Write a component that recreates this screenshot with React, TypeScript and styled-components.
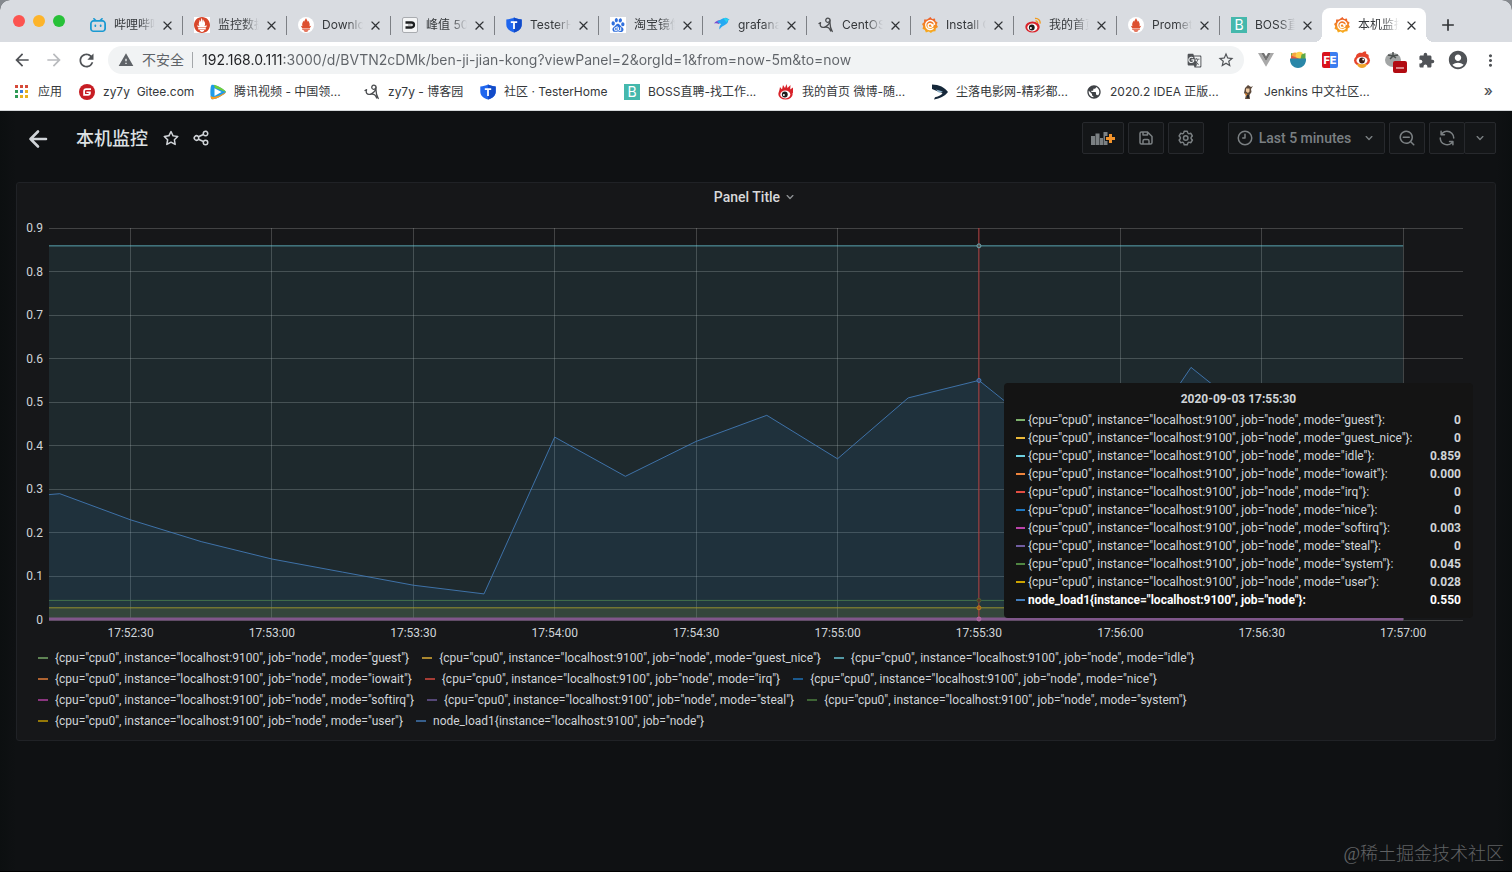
import React, { useLayoutEffect, useRef, useState } from "react";
import styled, { createGlobalStyle } from "styled-components";
import {
  MdArrowBack,
  MdArrowForward,
  MdRefresh,
  MdWarning,
  MdStarBorder,
  MdExtension,
  MdAccountCircle,
  MdMoreVert,
  MdGTranslate,
  MdClose,
  MdAdd,
  MdPublic,
} from "react-icons/md";
import { SiBilibili, SiPrometheus, SiBaidu } from "react-icons/si";

const uiFont = `Inter, "Noto Sans CJK SC", sans-serif`;
const panelFont = `Roboto, "Noto Sans CJK SC", sans-serif`;

const GlobalStyle = createGlobalStyle`
  *, *::before, *::after { box-sizing: border-box; }
  body { margin: 0; background: #85898e; font-family: ${uiFont}; }
  button { font: inherit; color: inherit; background: none; border: 0; padding: 0; margin: 0; cursor: pointer; }
  a { color: inherit; text-decoration: none; }
  svg { display: block; flex: none; }
`;

/* ---------- browser window ---------- */

const Window = styled.div`
  position: relative;
  display: flex;
  flex-direction: column;
  min-height: 100vh;
  border-radius: 10px 10px 0 0;
  overflow: hidden;
  background: #0f1113;
`;

const TabStrip = styled.header`
  display: flex;
  height: 42px;
  padding-right: 42px;
  background: #d9dce1;
`;

const TrafficLights = styled.div`
  display: flex;
  gap: 8px;
  width: 78px;
  padding: 15px 0 0 13px;
`;

const Light = styled.button<{ $color: string }>`
  width: 12px;
  height: 12px;
  border-radius: 50%;
  background: ${(p) => p.$color};
`;

const TabList = styled.nav`
  flex: 1;
  display: grid;
  grid-template-columns: repeat(8, minmax(0, 104fr)) repeat(4, minmax(0, 103fr)) minmax(0, 104fr);
  padding-top: 8px;
`;

const TabItem = styled.div<{ $active?: boolean; $divider?: boolean }>`
  position: relative;
  display: flex;
  align-items: center;
  padding: 0 7px 0 12px;
  border-radius: 8px 8px 0 0;
  background: ${(p) => (p.$active ? "#fff" : "transparent")};

  &::before {
    content: "";
    display: ${(p) => (p.$active ? "block" : "none")};
    position: absolute;
    bottom: 0;
    left: -8px;
    right: -8px;
    height: 8px;
    background:
      radial-gradient(circle at 0 0, transparent 8px, #fff 8px) left / 8px 8px no-repeat,
      radial-gradient(circle at 100% 0, transparent 8px, #fff 8px) right / 8px 8px no-repeat;
  }

  &::after {
    content: "";
    display: ${(p) => (p.$divider ? "block" : "none")};
    position: absolute;
    right: -1px;
    top: 8px;
    width: 1px;
    height: 19px;
    background: #7d8085;
  }
`;

const TabLink = styled.a`
  flex: 1;
  min-width: 0;
  display: flex;
  align-items: center;
  gap: 8px;
  height: 34px;
`;

const TabLabel = styled.span`
  flex: 1;
  min-width: 0;
  overflow: hidden;
  white-space: nowrap;
  font-size: 12px;
  line-height: 18px;
  color: #35383b;
  mask-image: linear-gradient(90deg, #000 calc(100% - 16px), transparent);
`;

const TabClose = styled.button`
  display: flex;
  align-items: center;
  justify-content: center;
  width: 16px;
  height: 16px;
  margin-left: 4px;
  color: #303336;
`;

const NewTab = styled.button`
  display: flex;
  align-items: center;
  justify-content: center;
  width: 44px;
  padding-top: 8px;
  color: #303336;
`;

const Toolbar = styled.div`
  display: flex;
  align-items: center;
  height: 36px;
  padding: 0 6px;
  background: #fff;
`;

const ToolButton = styled.button<{ $color?: string }>`
  display: flex;
  align-items: center;
  justify-content: center;
  width: 32px;
  height: 28px;
  color: ${(p) => p.$color ?? "#505357"};
`;

const Omnibox = styled.div`
  flex: 1;
  display: flex;
  align-items: center;
  height: 28px;
  margin: 0 6px;
  padding: 0 2px 0 10px;
  border-radius: 14px;
  background: #f1f3f4;
`;

const Security = styled.button`
  display: flex;
  align-items: center;
  gap: 8px;
  padding-right: 8px;
  border-right: 1px solid #a4a7aa;
  font-size: 14px;
  line-height: 16px;
  color: #5f6368;
`;

const Address = styled.input`
  flex: 1;
  min-width: 0;
  height: 24px;
  margin-left: 9px;
  padding: 0 0 2px;
  border: 0;
  outline: 0;
  font: 14px ${uiFont};
  color: #5f6368;
  -webkit-text-fill-color: transparent;
  background: linear-gradient(90deg, #202124 81px, #5f6368 81px);
  background-clip: text;
  -webkit-background-clip: text;
`;

const Bookmarks = styled.nav`
  display: flex;
  align-items: center;
  gap: 16px;
  height: 33px;
  padding: 0 19px 5px 13px;
  border-bottom: 1px solid #d5d8da;
  background: #fff;
`;

const Bookmark = styled.a`
  display: flex;
  align-items: center;
  gap: 8px;
  font-size: 12px;
  line-height: 18px;
  white-space: pre;
  color: #35383b;
`;

const BookmarkLabel = styled.span<{ $width?: number }>`
  width: ${(p) => (p.$width ? `${p.$width}px` : "auto")};
`;

const Overflow = styled.button`
  margin-left: auto;
  padding-bottom: 2px;
  font-size: 15px;
  font-weight: 500;
  line-height: 18px;
  color: #505357;
`;

/* ---------- brand marks ---------- */

const Gitee = () => (
  <svg width="16" height="16" viewBox="0 0 16 16">
    <circle cx="8" cy="8" r="8" fill="#c71d23" />
    <path d="M12 4.2H7.2a3 3 0 0 0-3 3v4.6h4.9a2.7 2.7 0 0 0 2.7-2.7V7.5H7.4v1.6h2.4a.8.8 0 0 1-.8.9H6V7.2A1.1 1.1 0 0 1 7.1 6H12z" fill="#fff" />
  </svg>
);

const Grafana = () => (
  <svg width="16" height="16" viewBox="0 0 16 16">
    <defs>
      <linearGradient id="grafana" x1="0" y1="0" x2="0" y2="1">
        <stop offset="0" stopColor="#ec5a2c" />
        <stop offset="1" stopColor="#f9b21d" />
      </linearGradient>
    </defs>
    <path
      fill="url(#grafana)"
      d="M8.4 0l1.7 1.9 2.9-.4.3 2.6 2.3 1.5-.9 2.2 1.3 2.3-2.2 1.5-.3 2.6-2.7.2L8.9 16l-2.2-1.4-2.8.9-1-2.5L.5 11.7l.7-2.5L0 7l2-1.7.1-2.7 2.9-.2z"
    />
    <path fill="none" stroke="#fff" strokeWidth="1.4" strokeLinecap="round" d="M12.6 7.2a4.5 4.5 0 1 0-1.5 4.300M9.9 8.3a1.9 1.9 0 1 0-1.7 2.2c2 0 3-1.4 2.8-3" />
  </svg>
);

const Shield = () => (
  <svg width="16" height="16" viewBox="0 0 16 16">
    <path d="M8 0.500C10 1.700 13 2.200 15.700 2.400V7.500c0 4-3 6.600-7.700 8-4.700-1.400-7.700-4-7.700-8V2.400C3 2.200 6 1.700 8 .5z" fill="#1f66ee" />
    <path d="M8 .5c2 1.200 5 1.700 7.700 1.900V7.500c0 4-3 6.600-7.700 8z" fill="#124bc8" />
    <path d="M4.800 4.300h6.400v1.600H8.900v6H7.100v-6H4.800z" fill="#fff" />
  </svg>
);

const BossTile = styled.span`
  display: flex;
  align-items: center;
  justify-content: center;
  width: 16px;
  height: 16px;
  background: #45b8ac;
  color: #fff;
  font-size: 14px;
  line-height: 16px;
`;
const Boss = () => <BossTile aria-hidden="true">B</BossTile>;

const Cnblogs = () => (
  <svg width="16" height="16" viewBox="0 0 16 16" fill="none" stroke="#4b4d50" strokeWidth="1.3" strokeLinecap="round" strokeLinejoin="round">
    <path d="M1 6.500l1.600-.8C1.500 8.500 3 11 6 10.300c3-.8 6-3.800 6.200-6.500C12.300 1.200 9.500.3 8.200 2 7 3.800 8.500 5.800 10.300 5.200 11.500 4.800 12 3.500 11.800 2.500M12.100 4c-.4 4 .4 7.500 2.200 10.500M6.500 10.300c2.800-.6 5.200.8 6.200 3.700" />
  </svg>
);

const PromBadge = styled.span<{ $square?: boolean }>`
  display: flex;
  align-items: center;
  justify-content: center;
  width: 16px;
  height: 16px;
  border-radius: ${(p) => (p.$square ? "0" : "50%")};
  background: #fff;
  color: #d8472b;
`;

const Flame = () => (
  <PromBadge>
    <svg width="16" height="16" viewBox="0 0 16 16" fill="#dd4f2f">
      <path d="M8 1c.3 1.500 1.600 2.100 1.500 3.800.4-.4.4-1 .4-1.400 1.500 1.700 2.300 3.700 1.600 5.800l1.700-.5-1.300 2.400H4.100L2.800 8.700l1.700.5c-.8-2-.1-4.200 1.600-5.800 0 .5.1 1 .4 1.400C6.300 3.100 7.700 2.500 8 1zM4.200 11.600h7.600v1.100H4.200zM5.500 13.200h5c-.4 1-1.500 1.500-2.500 1.500s-2.100-.5-2.500-1.500z" />
    </svg>
  </PromBadge>
);

const BlackD = () => (
  <svg width="16" height="16" viewBox="0 0 16 16">
    <rect x=".5" y=".5" width="15" height="15" rx="1.500" fill="#f4f5f6" stroke="#a9acb0" />
    <path d="M3.500 5.500h6a2.500 2.500 0 0 1 0 5h-6" fill="none" stroke="#1d1f21" strokeWidth="2.3" />
    <path d="M6 8h3.500" stroke="#888" strokeWidth="1" />
  </svg>
);

const Bird = () => (
  <svg width="16" height="16" viewBox="0 0 16 16">
    <path d="M0 6.500C2.500 3 5 3.200 7 3.200L5 7C3.500 6 1.500 6 0 6.500z" fill="#7b4bd0" />
    <path d="M3 4.500C6 3.500 8.500.8 11.500.8c2 0 2.300 1.200 4 1.800-1 .3-1.300 1-1.500 2-.6 3.500-5 2.900-8.500 7.900-.6-2 .2-4 1.700-5.500C5.500 6.500 4 5.500 3 4.500z" fill="#25a9f2" />
    <path d="M9.500 1.200c2.500-1 3.300.7 6 1.400-2 .6-2.300 1.500-3 3z" fill="#27d3ee" />
  </svg>
);

const WeiboEye = ({ flame }: { flame?: boolean }) => (
  <svg width="16" height="16" viewBox="0 0 16 16">
    {flame ? (
      <path d="M1 8L2 3l2 2.500L5 1l2 3L8.500 0l1 4 3-3-.3 4.500L15 3.500 15 9z" fill="#d8232a" />
    ) : (
      <path d="M10 1.500a4.300 4.300 0 0 1 5 5.200M10.500 4a2 2 0 0 1 2.200 2.400" fill="none" stroke="#f29a1c" strokeWidth="1.300" />
    )}
    <ellipse cx="7.500" cy="10" rx="7.200" ry="5.600" fill="#d8232a" />
    <ellipse cx="7.300" cy="10.500" rx="5" ry="3.900" fill="#fff" />
    <circle cx="6.800" cy="10.500" r="2.900" fill="#1c1c1c" />
    <circle cx="5.900" cy="11" r="1" fill="#fff" />
  </svg>
);

const Tencent = () => (
  <svg width="16" height="16" viewBox="0 0 16 16">
    <path d="M1.500 1C4-.7 15.800 6 16 8c-.2 2-12 8.700-14.500 7C0 13.500 0 2.500 1.500 1z" fill="#1e9be8" />
    <path d="M4 .8C8 1.500 15.900 6.500 16 8L5 4z" fill="#6fcf3a" />
    <path d="M3 13C7 13 12 10.500 16 8c-.2 2-12 8.700-14.500 7C1 14.500.8 13.500.7 12z" fill="#fb9c1c" />
    <path d="M4.500 4.200L11.500 8l-7 4z" fill="#fff" />
  </svg>
);

const Arrowhead = () => (
  <svg width="16" height="16" viewBox="0 0 16 16">
    <path d="M0 .5C7 .5 13 3.500 16 8c-3.500 4.500-8 6.500-14 7.500l1-2.200c4-.8 6.500-2.300 7.500-4.300L6 7.500 0 5z" fill="#152739" />
    <path d="M4 5.500l7 2-4 1.300z" fill="#8fb3cc" />
  </svg>
);

const Jenkins = () => (
  <svg width="16" height="16" viewBox="0 0 16 16">
    <path d="M5 4l3-3 3 2 2-1-2 3 .5 3-2 3 .5 4H5l1-4-2-2z" fill="#5d4a3c" />
    <path d="M6 4.500h3.500v3L8 9 6 7.500z" fill="#eec9a2" />
    <path d="M5 9l2.500 1L6 12.500z" fill="#d9822b" />
    <path d="M7 11h2v3H7z" fill="#2a2b30" />
  </svg>
);

const AppsGrid = () => (
  <svg width="17" height="16" viewBox="0 0 17 16">
    {["#d64a3a", "#d64a3a", "#d64a3a", "#2f9a55", "#3b7de0", "#e9b11f", "#2f9a55", "#e9b11f", "#e9b11f"].map((c, i) => (
      <rect key={i} x={2 + (i % 3) * 5} y={1 + Math.floor(i / 3) * 5} width="3" height="3" fill={c} />
    ))}
  </svg>
);

const VueMark = () => (
  <svg width="16" height="14" viewBox="0 0 16 14">
    <path d="M0 0h3.200L8 8.200 12.800 0H16L8 13.800z" fill="#a9a9a9" />
    <path d="M3.200 0H6l2 3.400L10 0h2.800L8 8.200z" fill="#737373" />
  </svg>
);

const Bowl = () => (
  <svg width="18" height="18" viewBox="0 0 18 18">
    <path d="M2 2l4 1-1 5H2z" fill="#5ea845" />
    <circle cx="6" cy="5" r="3.500" fill="#f4a340" />
    <circle cx="10.500" cy="4.500" r="3.800" fill="#fbd04a" />
    <path d="M12.500 3.500L16.500 2v6h-5z" fill="#5ea845" />
    <path d="M2 4.500L11 8H2z" fill="#e4573d" />
    <path d="M1 7.500h16c.5 5-3 9.500-8 9.500S.5 12.500 1 7.500z" fill="#2a87a8" />
  </svg>
);

const FeTile = styled.span`
  display: flex;
  align-items: center;
  justify-content: center;
  width: 16px;
  height: 16px;
  border-radius: 2px;
  background: linear-gradient(90deg, #d9121c 50%, #3b7df0 50%);
  color: #fff;
  font-size: 11px;
  font-weight: 800;
  line-height: 16px;
`;

const WeiboPet = () => (
  <svg width="18" height="18" viewBox="0 0 18 18">
    <path d="M3 8C2 3 6 1 9 2c1-1 3-2 4.500-1C12.500 1.500 13 2 13.500 3 16.500 3 16 6 15 8z" fill="#e6442c" />
    <ellipse cx="9" cy="9.500" rx="8" ry="5.500" fill="#e6442c" />
    <path d="M4 13h10c-.5 2.500-2.500 4-5 4s-4.500-1.500-5-4z" fill="#f2a42b" />
    <ellipse cx="9" cy="9.500" rx="5.500" ry="3.800" fill="#fff" />
    <circle cx="9" cy="9.500" r="2.900" fill="#3a1d18" />
    <circle cx="10.200" cy="8.500" r=".9" fill="#fff" />
  </svg>
);

const Tomato = () => (
  <svg width="26" height="26" viewBox="0 0 26 26">
    <ellipse cx="12" cy="13" rx="8" ry="7" fill="#a3a6a6" />
    <path d="M12 5v4m0 0L7 8m5 1l5-1m-5 1l-3 3m3-3l3 2" stroke="#4c5150" strokeWidth="1.500" fill="none" />
    <rect x="12" y="14" width="14" height="12" rx="2" fill="#b20b12" />
    <path d="M15 21h8" stroke="#fff" strokeWidth="1.200" />
  </svg>
);

/* ---------- dashboard ---------- */

const Dashboard = styled.main`
  flex: 1;
  display: flex;
  flex-direction: column;
  gap: 28px;
  padding: 11px 16px 16px;
  border-bottom: 1px solid #000;
  background: linear-gradient(90deg, #0c0f10, #0f1113 16px, #0f1113 calc(100% - 16px), #0c0f10);
  font-family: ${panelFont};
  color: #d0d4d8;
`;

const NavBar = styled.div`
  display: flex;
  align-items: center;
  height: 32px;
  padding-left: 10px;
`;

const BackButton = styled.button`
  margin-right: 26px;
  padding-top: 2px;
`;

const Title = styled.h1`
  margin: 0 14px 0 0;
  padding-top: 2px;
  font-size: 18px;
  font-weight: 500;
  line-height: 24px;
  color: #dde1e4;
`;

const TitleAction = styled.button`
  margin-right: 12px;
`;

const NavActions = styled.div`
  display: flex;
  gap: 4px;
  margin-left: auto;
`;

const NavButton = styled.button<{ $width: number; $gapBefore?: boolean; $joined?: boolean }>`
  display: flex;
  align-items: center;
  justify-content: center;
  width: ${(p) => p.$width}px;
  height: 32px;
  margin-left: ${(p) => (p.$gapBefore ? "20px" : p.$joined ? "-5px" : "0")};
  border: 1px solid #27292d;
  border-radius: 2px;
  background: #141618;
  color: #7b8083;
`;

const RangeLabel = styled.span`
  margin: 0 10px 0 5px;
  font-size: 14px;
  font-weight: 500;
  line-height: 20px;
  white-space: nowrap;
`;

const Panel = styled.section`
  display: flex;
  flex-direction: column;
  border: 1px solid #202226;
  border-radius: 3px;
  background: #161719;
`;

const PanelTitle = styled.button`
  display: flex;
  align-items: center;
  justify-content: center;
  gap: 2px;
  height: 28px;
  margin-bottom: 2px;
  font-size: 14px;
  font-weight: 500;
  line-height: 20px;
  color: #d8d9da;

  svg {
    color: #8e9194;
  }
`;

const ChartArea = styled.div`
  position: relative;
  height: 432px;

  text {
    font: 12px ${panelFont};
    fill: #d0d4d8;
  }
`;

const Legend = styled.ul`
  display: flex;
  flex-wrap: wrap;
  column-gap: 13px;
  margin: 0;
  padding: 2px 16px 9px 21px;
  list-style: none;
`;

const LegendItem = styled.li`
  display: flex;
  align-items: center;
  gap: 7px;
  height: 21px;
  font-size: 12px;
  line-height: 18px;
  white-space: nowrap;
`;

const Swatch = styled.span<{ $color: string; $dim?: boolean }>`
  display: inline-block;
  width: ${(p) => (p.$dim ? 10 : 9)}px;
  height: 2px;
  background: ${(p) => p.$color};
  opacity: ${(p) => (p.$dim ? 0.7 : 1)};
`;

const Tooltip = styled.div`
  position: absolute;
  width: 469px;
  padding: 7px 12px 9px;
  border-radius: 4px;
  background: #141414;
`;

const TooltipTable = styled.table`
  width: 100%;
  border-collapse: collapse;
  font-size: 12px;
  line-height: 18px;
  white-space: nowrap;

  caption {
    padding-bottom: 3px;
    font-weight: 700;
    text-align: center;
  }
  th {
    display: flex;
    align-items: center;
    gap: 3px;
    padding: 0;
    font-weight: 400;
    text-align: left;
  }
  td {
    padding: 0;
    font-weight: 700;
    text-align: right;
  }
`;

const TooltipRow = styled.tr<{ $active?: boolean }>`
  color: ${(p) => (p.$active ? "#fff" : "inherit")};
  && th {
    font-weight: ${(p) => (p.$active ? 700 : 400)};
  }
`;

const Watermark = styled.div`
  position: absolute;
  right: 8px;
  bottom: 5px;
  font: 300 18px/26px "Liberation Serif", "Noto Sans CJK SC", serif;
  color: #606264;
`;

/* Line icons on a 24-unit grid. */
const paths = {
  star: "M22,9.67A1,1,0,0,0,21.14,9l-5.69-.83L12.9,3a1,1,0,0,0-1.8,0L8.55,8.16,2.86,9a1,1,0,0,0-.81.68,1,1,0,0,0,.25,1l4.13,4-1,5.68A1,1,0,0,0,6.9,21.44L12,18.77l5.1,2.67a.93.93,0,0,0,.46.12,1,1,0,0,0,.59-.19,1,1,0,0,0,.4-1l-1-5.68,4.13-4A1,1,0,0,0,22,9.67Zm-6.15,4a1,1,0,0,0-.29.88l.72,4.2-3.76-2a1.06,1.06,0,0,0-.94,0l-3.76,2,.72-4.2a1,1,0,0,0-.29-.88l-3-3,4.21-.61a1,1,0,0,0,.76-.55L12,5.7l1.88,3.82a1,1,0,0,0,.76.55l4.21.61Z",
  share:
    "M18,14a4,4,0,0,0-3.08,1.48l-5.1-2.35a3.64,3.64,0,0,0,0-2.26l5.1-2.35A4,4,0,1,0,14,6a4.17,4.17,0,0,0,.07.71L8.79,9.14a4,4,0,1,0,0,5.72l5.28,2.43A4.17,4.17,0,0,0,14,18a4,4,0,1,0,4-4ZM18,4a2,2,0,1,1-2,2A2,2,0,0,1,18,4ZM6,14a2,2,0,1,1,2-2A2,2,0,0,1,6,14Zm12,6a2,2,0,1,1,2-2A2,2,0,0,1,18,20Z",
  save: "M20.71,9.29l-6-6a1,1,0,0,0-.32-.21A1.09,1.09,0,0,0,14,3H6A3,3,0,0,0,3,6V18a3,3,0,0,0,3,3H18a3,3,0,0,0,3-3V10A1,1,0,0,0,20.71,9.29ZM9,5h4V7H9Zm6,14H9V16a1,1,0,0,1,1-1h4a1,1,0,0,1,1,1Zm4-1a1,1,0,0,1-1,1H17V16a3,3,0,0,0-3-3H10a3,3,0,0,0-3,3v3H6a1,1,0,0,1-1-1V6A1,1,0,0,1,6,5H7V8A1,1,0,0,0,8,9h6a1,1,0,0,0,1-1V6.41l4,4Z",
  cog: "M19.9,12.66a1,1,0,0,1,0-1.32L21.18,9.9a1,1,0,0,0,.12-1.17l-2-3.46a1,1,0,0,0-1.07-.48l-1.88.38a1,1,0,0,1-1.15-.66l-.61-1.83A1,1,0,0,0,13.64,2h-4a1,1,0,0,0-1,.68L8.08,4.51a1,1,0,0,1-1.15.66L5,4.79A1,1,0,0,0,4,5.27L2,8.73A1,1,0,0,0,2.1,9.9l1.27,1.44a1,1,0,0,1,0,1.32L2.1,14.1A1,1,0,0,0,2,15.27l2,3.46a1,1,0,0,0,1.07.48l1.88-.38a1,1,0,0,1,1.15.66l.61,1.83a1,1,0,0,0,1,.68h4a1,1,0,0,0,.95-.68l.61-1.83a1,1,0,0,1,1.15-.66l1.88.38a1,1,0,0,0,1.07-.48l2-3.46a1,1,0,0,0-.12-1.17ZM18.41,14l.8.9-1.28,2.22-1.18-.24a3,3,0,0,0-3.45,2L12.92,20H10.36L10,18.86a3,3,0,0,0-3.45-2l-1.18.24L4.07,14.89l.8-.9a3,3,0,0,0,0-4l-.8-.9L5.35,6.89l1.18.24a3,3,0,0,0,3.45-2L10.36,4h2.56l.38,1.14a3,3,0,0,0,3.45,2l1.18-.24,1.28,2.22-.8.9A3,3,0,0,0,18.41,14ZM11.64,8a4,4,0,1,0,4,4A4,4,0,0,0,11.64,8Zm0,6a2,2,0,1,1,2-2A2,2,0,0,1,11.64,14Z",
  clock:
    "M12,2A10,10,0,1,0,22,12,10,10,0,0,0,12,2Zm0,18a8,8,0,1,1,8-8A8,8,0,0,1,12,20ZM12,6a1,1,0,0,0-1,1v4H9a1,1,0,0,0,0,2h3a1,1,0,0,0,1-1V7A1,1,0,0,0,12,6Z",
  down: "M17,9.17a1,1,0,0,0-1.41,0L12,12.71,8.46,9.17a1,1,0,0,0-1.41,0,1,1,0,0,0,0,1.42l4.24,4.24a1,1,0,0,0,1.42,0L17,10.59A1,1,0,0,0,17,9.17Z",
  zoomOut:
    "M15,10H7a1,1,0,0,0,0,2h8a1,1,0,0,0,0-2Zm6.71,10.29L18,16.61A9,9,0,1,0,16.61,18l3.68,3.68a1,1,0,0,0,1.42,0A1,1,0,0,0,21.71,20.29ZM11,18a7,7,0,1,1,7-7A7,7,0,0,1,11,18Z",
  sync: "M19.91,15.51H15.38a1,1,0,0,0,0,2h2.4A8,8,0,0,1,4,12a1,1,0,0,0-2,0,10,10,0,0,0,16.88,7.23V21a1,1,0,0,0,2,0V16.5A1,1,0,0,0,19.91,15.51ZM12,2A10,10,0,0,0,5.12,4.77V3a1,1,0,0,0-2,0V7.5a1,1,0,0,0,1,1h4.5a1,1,0,0,0,0-2H6.22A8,8,0,0,1,20,12a1,1,0,0,0,2,0A10,10,0,0,0,12,2Z",
};

const Glyph = ({ name, size }: { name: keyof typeof paths; size: number }) => (
  <svg width={size} height={size} viewBox="0 0 24 24" fill="currentColor" aria-hidden="true">
    <path d={paths[name]} />
  </svg>
);

const AddPanelIcon = () => (
  <svg width="26" height="16" viewBox="0 0 26 16" aria-hidden="true">
    <path d="M1 6h4v9H1zM5.500 3.500h4V15h-4zM10 8h3v7h-3zM13.500 2h4v13h-4z" fill="#7b8083" />
    <path d="M15 6h3V3h5v3h3v5h-3v3h-5v-3h-3z" fill="#141618" />
    <path d="M16 7h3V4h3v3h3v3h-3v3h-3v-3h-3z" fill="#f2932b" />
  </svg>
);

/* ---------- data ---------- */

const tabs = [
  { title: "哔哩哔哩", icon: <SiBilibili size={16} color="#1b9ad2" /> },
  { title: "监控数据", icon: <PromBadge $square><SiPrometheus size={16} /></PromBadge> },
  { title: "Download", icon: <Flame /> },
  { title: "峰值 500", icon: <BlackD /> },
  { title: "TesterHome", icon: <Shield /> },
  { title: "淘宝镜像", icon: <PromBadge $square><SiBaidu size={14} color="#2f6fdd" /></PromBadge> },
  { title: "grafana", icon: <Bird /> },
  { title: "CentOS 7", icon: <Cnblogs /> },
  { title: "Install Gr", icon: <Grafana /> },
  { title: "我的首页", icon: <WeiboEye /> },
  { title: "Prometheus", icon: <Flame /> },
  { title: "BOSS直聘", icon: <Boss /> },
  { title: "本机监控", icon: <Grafana />, active: true },
];

const bookmarks: { label: string; icon: React.ReactNode; width?: number }[] = [
  { label: "应用", icon: <AppsGrid />, width: 25 },
  { label: "zy7y  Gitee.com", icon: <Gitee />, width: 91 },
  { label: "腾讯视频 - 中国领...", icon: <Tencent />, width: 114 },
  { label: "zy7y - 博客园", icon: <Cnblogs />, width: 76 },
  { label: "社区 · TesterHome", icon: <Shield />, width: 104 },
  { label: "BOSS直聘-找工作...", icon: <Boss />, width: 114 },
  { label: "我的首页 微博-随...", icon: <WeiboEye flame />, width: 114 },
  { label: "尘落电影网-精彩都...", icon: <Arrowhead />, width: 114 },
  { label: "2020.2 IDEA 正版...", icon: <MdPublic size={16} color="#3f4246" />, width: 114 },
  { label: "Jenkins 中文社区...", icon: <Jenkins />, width: 114 },
];

const cpu = (mode: string) => `{cpu="cpu0", instance="localhost:9100", job="node", mode="${mode}"}`;

const series = [
  { name: cpu("guest"), value: "0", color: "#7eb26d" },
  { name: cpu("guest_nice"), value: "0", color: "#eab839" },
  { name: cpu("idle"), value: "0.859", color: "#6ed0e0" },
  { name: cpu("iowait"), value: "0.000", color: "#ef843c" },
  { name: cpu("irq"), value: "0", color: "#e24d42" },
  { name: cpu("nice"), value: "0", color: "#1f78c1" },
  { name: cpu("softirq"), value: "0.003", color: "#ba43a9" },
  { name: cpu("steal"), value: "0", color: "#705da0" },
  { name: cpu("system"), value: "0.045", color: "#508642" },
  { name: cpu("user"), value: "0.028", color: "#cca300" },
  { name: `node_load1{instance="localhost:9100", job="node"}`, value: "0.550", color: "#447ebc", active: true },
];

/* Seconds after 17:52:12.7 (left edge of the range) and the load sampled there. */
const load: [number, number][] = [
  [0, 0.288], [2.3, 0.29], [17.3, 0.23], [32.3, 0.18], [47.3, 0.14], [62.3, 0.11], [77.3, 0.08], [92.3, 0.06],
  [107.3, 0.42], [122.3, 0.33], [137.3, 0.41], [152.3, 0.47], [167.3, 0.37], [182.3, 0.51], [197.3, 0.55],
  [212.3, 0.42], [227.3, 0.34], [242.3, 0.58], [257.3, 0.45], [272.3, 0.38], [287.3, 0.34],
];

const times = ["17:52:30", "17:53:00", "17:53:30", "17:54:00", "17:54:30", "17:55:00", "17:55:30", "17:56:00", "17:56:30", "17:57:00"];
const levels = [0, 0.1, 0.2, 0.3, 0.4, 0.5, 0.6, 0.7, 0.8, 0.9];

const Chart = () => {
  const ref = useRef<HTMLDivElement>(null);
  const [width, setWidth] = useState(1478);

  useLayoutEffect(() => {
    const el = ref.current;
    if (!el) return;
    const measure = () => setWidth(el.clientWidth);
    measure();
    const observer = new ResizeObserver(measure);
    observer.observe(el);
    return () => observer.disconnect();
  }, []);

  const left = 32;
  const right = width - 32;
  const top = 15;
  const bottom = 407;
  const x = (t: number) => left + ((right - left) * t) / 300;
  const y = (v: number) => bottom - ((bottom - top) * v) / 0.9;
  const last = x(287.3);
  const cursor = x(197.3);
  const loadLine = load.map(([t, v]) => `${x(t).toFixed(1)},${y(v).toFixed(1)}`).join(" ");

  const flat = [
    { v: 0.859, stroke: "#6ed0e0", fill: 0.1, opacity: 0.75 },
    { v: 0.045, stroke: "#508642", fill: 0.1, opacity: 0.8 },
    { v: 0.028, stroke: "#b3a01c", fill: 0.14, opacity: 0.9 },
  ];

  return (
    <ChartArea ref={ref}>
      <svg width={width} height="432" role="img" aria-label="CPU modes and load over the last five minutes">
        <g stroke="#c8c8c8" strokeOpacity="0.25" shapeRendering="crispEdges">
          {levels.map((v) => (
            <line key={v} x1={left} x2={right} y1={y(v)} y2={y(v)} />
          ))}
          {times.map((t, i) => (
            <line key={t} x1={x(17.3 + i * 30)} x2={x(17.3 + i * 30)} y1={top} y2={bottom} />
          ))}
        </g>
        {flat.map((s) => (
          <g key={s.v}>
            <rect x={left} y={y(s.v)} width={last - left} height={bottom - y(s.v)} fill={s.stroke} fillOpacity={s.fill} />
            <line x1={left} x2={last} y1={y(s.v)} y2={y(s.v)} stroke={s.stroke} strokeOpacity={s.opacity} />
          </g>
        ))}
        <polygon points={`${left},${bottom} ${loadLine} ${last},${bottom}`} fill="#2a6db0" fillOpacity="0.12" />
        <polyline points={loadLine} fill="none" stroke="#447ebc" strokeOpacity="0.85" />
        <line x1={left} x2={last} y1={bottom - 1} y2={bottom - 1} stroke="#80578a" strokeWidth="3" />
        <line x1={cursor} x2={cursor} y1={top} y2={bottom} stroke="#aa2e2e" />
        <circle cx={cursor} cy={y(0.859)} r="2" fill="#555" stroke="#6ea6ae" />
        <circle cx={cursor} cy={y(0.55)} r="2" fill="#444a70" stroke="#447ebc" />
        <circle cx={cursor} cy={y(0.045)} r="2" fill="#5e3527" stroke="#4f5f34" />
        <circle cx={cursor} cy={y(0.028)} r="2" fill="#a4521f" stroke="#b3801c" />
        <circle cx={cursor} cy={bottom - 1} r="2" fill="#a35e90" stroke="#b06aa5" />
        {levels.map((v) => (
          <text key={v} x={left - 6} y={y(v) + 4} textAnchor="end">
            {v}
          </text>
        ))}
        {times.map((t, i) => (
          <text key={t} x={x(17.3 + i * 30)} y={bottom + 17} textAnchor="middle">
            {t}
          </text>
        ))}
      </svg>
      <Tooltip role="tooltip" style={{ left: cursor + 25, top: Math.round(y(0.55)) + 3 }}>
        <TooltipTable>
          <caption>2020-09-03 17:55:30</caption>
          <tbody>
            {series.map((s) => (
              <TooltipRow key={s.name} $active={s.active}>
                <th scope="row">
                  <Swatch $color={s.color} />
                  {s.name}:
                </th>
                <td>{s.value}</td>
              </TooltipRow>
            ))}
          </tbody>
        </TooltipTable>
      </Tooltip>
    </ChartArea>
  );
};

export default function App() {
  return (
    <>
      <GlobalStyle />
      <Window>
        <TabStrip>
          <TrafficLights>
            <Light $color="#fc5450" aria-label="Close window" />
            <Light $color="#fdb42a" aria-label="Minimize window" />
            <Light $color="#27c138" aria-label="Zoom window" />
          </TrafficLights>
          <TabList aria-label="Tabs">
            {tabs.map((t, i) => (
              <TabItem key={t.title} $active={t.active} $divider={i < tabs.length - 2}>
                <TabLink href="#">
                  {t.icon}
                  <TabLabel>{t.title}</TabLabel>
                </TabLink>
                <TabClose aria-label={`Close ${t.title}`}>
                  <MdClose size={15} />
                </TabClose>
              </TabItem>
            ))}
          </TabList>
          <NewTab aria-label="New tab">
            <MdAdd size={20} />
          </NewTab>
        </TabStrip>

        <Toolbar>
          <ToolButton aria-label="Back"><MdArrowBack size={20} /></ToolButton>
          <ToolButton aria-label="Forward" $color="#b9bbbe"><MdArrowForward size={20} /></ToolButton>
          <ToolButton aria-label="Reload"><MdRefresh size={21} /></ToolButton>
          <Omnibox>
            <Security>
              <MdWarning size={16} />
              不安全
            </Security>
            <Address
              aria-label="Address"
              defaultValue="192.168.0.111:3000/d/BVTN2cDMk/ben-ji-jian-kong?viewPanel=2&orgId=1&from=now-5m&to=now"
            />
            <ToolButton aria-label="Translate"><MdGTranslate size={15} /></ToolButton>
            <ToolButton aria-label="Bookmark this page"><MdStarBorder size={18} /></ToolButton>
          </Omnibox>
          <ToolButton aria-label="Vue devtools"><VueMark /></ToolButton>
          <ToolButton aria-label="Bowl"><Bowl /></ToolButton>
          <ToolButton aria-label="FE helper"><FeTile>FE</FeTile></ToolButton>
          <ToolButton aria-label="Weibo"><WeiboPet /></ToolButton>
          <ToolButton aria-label="Tomato timer"><Tomato /></ToolButton>
          <ToolButton aria-label="Extensions"><MdExtension size={17} /></ToolButton>
          <ToolButton aria-label="Profile"><MdAccountCircle size={22} /></ToolButton>
          <ToolButton aria-label="Menu"><MdMoreVert size={19} /></ToolButton>
        </Toolbar>

        <Bookmarks aria-label="Bookmarks">
          {bookmarks.map((b) => (
            <Bookmark key={b.label} href="#">
              {b.icon}
              <BookmarkLabel $width={b.width}>{b.label}</BookmarkLabel>
            </Bookmark>
          ))}
          <Overflow aria-label="More bookmarks">»</Overflow>
        </Bookmarks>

        <Dashboard>
          <NavBar>
            <BackButton aria-label="Go back">
              <svg width="24" height="24" viewBox="0 0 24 24" fill="none" stroke="currentColor" strokeWidth="2.6" strokeLinecap="round" strokeLinejoin="round">
                <path d="M20 12H4.500M12 4.500L4.500 12l7.500 7.500" />
              </svg>
            </BackButton>
            <Title>本机监控</Title>
            <TitleAction aria-label="Mark as favorite"><Glyph name="star" size={18} /></TitleAction>
            <TitleAction aria-label="Share dashboard"><Glyph name="share" size={18} /></TitleAction>
            <NavActions>
              <NavButton $width={42} aria-label="Add panel"><AddPanelIcon /></NavButton>
              <NavButton $width={36} aria-label="Save dashboard"><Glyph name="save" size={18} /></NavButton>
              <NavButton $width={36} aria-label="Dashboard settings"><Glyph name="cog" size={18} /></NavButton>
              <NavButton $width={157} $gapBefore>
                <Glyph name="clock" size={18} />
                <RangeLabel>Last 5 minutes</RangeLabel>
                <Glyph name="down" size={16} />
              </NavButton>
              <NavButton $width={36} aria-label="Zoom out"><Glyph name="zoomOut" size={18} /></NavButton>
              <NavButton $width={36} aria-label="Refresh"><Glyph name="sync" size={18} /></NavButton>
              <NavButton $width={32} $joined aria-label="Refresh interval"><Glyph name="down" size={16} /></NavButton>
            </NavActions>
          </NavBar>

          <Panel>
            <PanelTitle>
              Panel Title
              <Glyph name="down" size={16} />
            </PanelTitle>
            <Chart />
            <Legend>
              {series.map((s) => (
                <LegendItem key={s.name}>
                  <Swatch $color={s.color} $dim />
                  {s.name}
                </LegendItem>
              ))}
            </Legend>
          </Panel>
        </Dashboard>
        <Watermark>@稀土掘金技术社区</Watermark>
      </Window>
    </>
  );
}
